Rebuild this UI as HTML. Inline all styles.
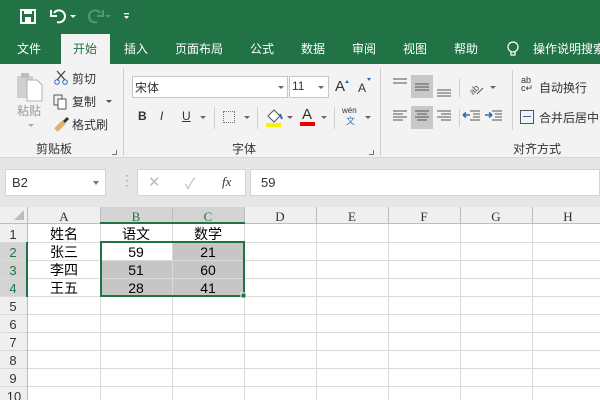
<!DOCTYPE html>
<html><head><meta charset="utf-8"><style>
*{margin:0;padding:0;box-sizing:border-box}
body{width:600px;height:400px;overflow:hidden;position:relative;background:#fff;font-family:"Liberation Sans","Noto Sans CJK SC",sans-serif;font-size:12px;color:#333}
.a{position:absolute}
.t{position:absolute;color:#fff;font-size:12px;top:40px;white-space:nowrap}
.r{position:absolute;font-size:12px;color:#333;white-space:nowrap}
.s{font-family:"Liberation Serif","Noto Serif CJK SC",serif}
.cell{position:absolute;text-align:center;font-size:14px;color:#000;font-family:"Liberation Sans","Noto Sans CJK SC",sans-serif;line-height:18px;height:18px}
</style></head><body>
<div class="a" style="left:0;top:0;width:600px;height:64px;background:#217346"></div>
<svg class="a" style="left:0;top:0" width="140" height="32">
<rect x="21" y="10" width="14" height="13" fill="none" stroke="#fff" stroke-width="2"/><rect x="24" y="10" width="8" height="4" fill="#fff"/><rect x="25" y="17" width="6" height="6" fill="#fff"/>
<path d="M54 13 A6 6 0 1 1 57 22" fill="none" stroke="#fff" stroke-width="2"/><path d="M51 10 L51 16 L57 16" fill="none" stroke="#fff" stroke-width="2"/>
<path d="M70 15 l3 3 l3 -3z" fill="#fff"/>
<path d="M100 13 A6 6 0 1 0 97 22" fill="none" stroke="#4f9a70" stroke-width="2"/><path d="M103 10 L103 16 L97 16" fill="none" stroke="#4f9a70" stroke-width="2"/>
<path d="M105 15 l3 3 l3 -3z" fill="#4f9a70"/>
<rect x="124" y="13" width="5" height="1.3" fill="#fff"/><path d="M124 16 l2.5 3 l2.5 -3z" fill="#fff"/>
</svg>
<div class="a" style="left:61px;top:34px;width:49px;height:30px;background:#f3f3f3"></div>
<div class="t" style="left:17px">文件</div>
<div class="t" style="left:73px;color:#217346">开始</div>
<div class="t" style="left:124px">插入</div>
<div class="t" style="left:175px">页面布局</div>
<div class="t" style="left:250px">公式</div>
<div class="t" style="left:301px">数据</div>
<div class="t" style="left:352px">审阅</div>
<div class="t" style="left:403px">视图</div>
<div class="t" style="left:454px">帮助</div>
<svg class="a" style="left:505px;top:40px" width="16" height="18"><circle cx="8" cy="7" r="5" fill="none" stroke="#fff" stroke-width="1.2"/><path d="M6 12 v3 h4 v-3" fill="none" stroke="#fff" stroke-width="1.2"/></svg>
<div class="t" style="left:533px">操作说明搜索</div>
<div class="a" style="left:0;top:64px;width:600px;height:94px;background:#f3f3f3;border-bottom:1px solid #d6d6d6"></div>
<div class="a" style="left:0;top:158px;width:600px;height:49px;background:#e6e6e6"></div>
<div class="a" style="left:123px;top:68px;width:1px;height:88px;background:#d0d0d0"></div>
<div class="a" style="left:380px;top:68px;width:1px;height:88px;background:#d0d0d0"></div>
<div class="a" style="left:512px;top:70px;width:1px;height:60px;background:#d0d0d0"></div>
<svg class="a" style="left:14px;top:70px" width="32" height="34"><rect x="3" y="6" width="16" height="22" fill="#d0d0d0"/><rect x="7" y="3" width="8" height="5" fill="#bdbdbd"/><path d="M13 10 h10 l5 5 v16 h-15z" fill="#fff" stroke="#b0b0b0"/></svg>
<div class="r" style="left:17px;top:102px;color:#999">粘贴</div>
<div class="a" style="left:28px;top:124px;border:3px solid transparent;border-top:3px solid #aaa"></div>
<svg class="a" style="left:52px;top:68px" width="20" height="70">
<path d="M5 3 L13 12 M13 3 L5 12" stroke="#444" stroke-width="1.3"/><circle cx="5" cy="14" r="2.3" fill="none" stroke="#2b6cb0"/><circle cx="13" cy="14" r="2.3" fill="none" stroke="#2b6cb0"/>
<rect x="2" y="27" width="8" height="10" fill="none" stroke="#555"/><rect x="6" y="31" width="8" height="10" fill="#fff" stroke="#555"/>
<path d="M4 62 L12 54" stroke="#e0b070" stroke-width="5"/><path d="M12 54 L16 50" stroke="#333" stroke-width="3"/>
</svg>
<div class="r" style="left:72px;top:70px">剪切</div>
<div class="r" style="left:72px;top:93px">复制</div>
<div class="a" style="left:106px;top:100px;border:3px solid transparent;border-top:3px solid #555"></div>
<div class="r" style="left:72px;top:116px">格式刷</div>
<div class="r" style="left:36px;top:140px">剪贴板</div>
<div class="a" style="left:112px;top:150px;width:5px;height:5px;border-right:1px solid #777;border-bottom:1px solid #777"></div>
<div class="a" style="left:132px;top:76px;width:156px;height:22px;background:#fff;border:1px solid #c6c6c6"></div>
<div class="r" style="left:135px;top:79px">宋体</div>
<div class="a" style="left:278px;top:86px;border:3px solid transparent;border-top:3px solid #666"></div>
<div class="a" style="left:289px;top:76px;width:40px;height:22px;background:#fff;border:1px solid #c6c6c6"></div>
<div class="r" style="left:292px;top:79px">11</div>
<div class="a" style="left:318px;top:86px;border:3px solid transparent;border-top:3px solid #666"></div>
<div class="r" style="left:335px;top:78px;font-size:15px">A</div><div class="a" style="left:345px;top:78px;border:2px solid transparent;border-bottom:3px solid #2b6cb0"></div>
<div class="r" style="left:358px;top:81px;font-size:12px">A</div><div class="a" style="left:367px;top:78px;border:2px solid transparent;border-top:3px solid #2b6cb0"></div>
<div class="r" style="left:138px;top:109px;font-weight:bold">B</div>
<div class="r" style="left:160px;top:109px;font-style:italic">I</div>
<div class="r" style="left:182px;top:109px;text-decoration:underline">U</div>
<div class="a" style="left:200px;top:116px;border:3px solid transparent;border-top:3px solid #666"></div>
<div class="a" style="left:214px;top:107px;width:1px;height:22px;background:#d0d0d0"></div>
<div class="a" style="left:223px;top:111px;width:12px;height:12px;border:1px dotted #777"></div>
<div class="a" style="left:244px;top:116px;border:3px solid transparent;border-top:3px solid #666"></div>
<div class="a" style="left:257px;top:107px;width:1px;height:22px;background:#d0d0d0"></div>
<svg class="a" style="left:264px;top:106px" width="20" height="22"><path d="M4 10 L10 4 L16 10 L10 16z" fill="#fff" stroke="#555"/><path d="M16 8 l2 5" stroke="#2b6cb0" stroke-width="2"/><rect x="2" y="17" width="15" height="4" fill="#f5f500"/></svg>
<div class="a" style="left:287px;top:116px;border:3px solid transparent;border-top:3px solid #666"></div>
<div class="r" style="left:302px;top:106px;font-size:15px">A</div><div class="a" style="left:300px;top:122px;width:15px;height:4px;background:#e00"></div>
<div class="a" style="left:321px;top:116px;border:3px solid transparent;border-top:3px solid #666"></div>
<div class="a" style="left:334px;top:107px;width:1px;height:22px;background:#d0d0d0"></div>
<div class="r" style="left:342px;top:106px;font-size:8px">wén</div><div class="r" style="left:346px;top:114px;font-size:9px;color:#2b6cb0">文</div>
<div class="a" style="left:365px;top:116px;border:3px solid transparent;border-top:3px solid #666"></div>
<div class="r" style="left:232px;top:140px">字体</div>
<div class="a" style="left:369px;top:150px;width:5px;height:5px;border-right:1px solid #777;border-bottom:1px solid #777"></div>
<!-- align -->
<div class="a" style="left:411px;top:75px;width:22px;height:23px;background:#c8c8c8"></div>
<div class="a" style="left:411px;top:106px;width:22px;height:23px;background:#c8c8c8"></div>
<svg class="a" style="left:390px;top:74px" width="125" height="58">
<g stroke="#555" stroke-width="1">
<path d="M3 5h14M3 9h14M25 10h14M25 13h14M25 16h14M47 16h14M47 19h14M47 22h14"/>
<path d="M3 37h14M3 40h10M3 43h14M3 46h10M25 37h14M27 40h10M25 43h14M27 46h10M47 37h14M51 40h10M47 43h14M51 46h10"/>
<path d="M80 37h10M83 40h7M83 43h7M80 46h10M102 37h10M105 40h7M105 43h7M102 46h10"/>
</g>
<path d="M73 41h7M73 41l3-2.5M73 41l3 2.5" stroke="#2b6cb0" stroke-width="1.5"/><path d="M95 41h7M102 41l-3-2.5M102 41l-3 2.5" stroke="#2b6cb0" stroke-width="1.5"/>
<text x="78" y="20" font-size="9" fill="#555" font-family="Liberation Sans" transform="rotate(-45 82 15)">ab</text>
<path d="M87 20l6-6" stroke="#555"/>
</svg>
<div class="a" style="left:490px;top:86px;border:3px solid transparent;border-top:3px solid #666"></div>
<div class="a" style="left:459px;top:79px;width:1px;height:18px;background:#d0d0d0"></div>
<div class="a" style="left:459px;top:109px;width:1px;height:18px;background:#d0d0d0"></div>
<div class="r" style="left:513px;top:140px">对齐方式</div>
<div class="r" style="left:521px;top:76px;font-size:9px;line-height:8px">ab<br>c↵</div>
<div class="r" style="left:539px;top:79px">自动换行</div>
<div class="a" style="left:520px;top:110px;width:14px;height:14px;border:1px solid #555"></div>
<div class="a" style="left:523px;top:116px;width:8px;height:1px;background:#2b6cb0"></div>
<div class="r" style="left:539px;top:109px">合并后居中</div>
<!-- formula bar -->
<div class="a" style="left:5px;top:169px;width:101px;height:27px;background:#fff;border:1px solid #d4d4d4"></div>
<div class="r" style="left:12px;top:175px;font-size:13px">B2</div>
<div class="a" style="left:93px;top:181px;border:3.5px solid transparent;border-top:4px solid #777"></div>
<div class="r" style="left:120px;top:172px;color:#aaa;font-size:14px">⋮</div>
<div class="a" style="left:137px;top:169px;width:109px;height:27px;background:#fff;border:1px solid #d4d4d4"></div>
<div class="r" style="left:148px;top:173px;color:#bbb;font-size:15px">✕</div>
<div class="r" style="left:185px;top:173px;color:#bbb;font-size:15px">✓</div>
<div class="r s" style="left:222px;top:174px;font-style:italic;font-size:13px">fx</div>
<div class="a" style="left:250px;top:169px;width:350px;height:27px;background:#fff;border:1px solid #d4d4d4"></div>
<div class="r" style="left:261px;top:175px;font-size:13px">59</div>
<!-- grid -->
<svg class="a" style="left:0;top:207px" width="600" height="193">
<rect x="0" y="0" width="600" height="17" fill="#efefef"/>
<rect x="0" y="17" width="28" height="176" fill="#efefef"/>
<rect x="101" y="0" width="143" height="17" fill="#d4d4d4"/>
<rect x="0" y="35" width="28" height="54" fill="#d4d4d4"/>
<rect x="101" y="35" width="143" height="54" fill="#c6c6c6"/>
<rect x="101" y="35" width="71" height="18" fill="#fff"/>
<g stroke="#dadada" stroke-width="1">
<path d="M0 35.5h600M0 53.5h600M0 71.5h600M0 89.5h600M0 107.5h600M0 125.5h600M0 143.5h600M0 161.5h600M0 179.5h600"/>
<path d="M100.5 17v176M172.5 17v176M244.5 17v176M316.5 17v176M388.5 17v176M460.5 17v176M532.5 17v176"/>
</g>
<g stroke="#bdbdbd" stroke-width="1">
<path d="M0 16.5h600M27.5 0v193M100.5 0v17M172.5 0v17M244.5 0v17M316.5 0v17M388.5 0v17M460.5 0v17M532.5 0v17"/>
</g>
<path d="M14 13 L24 13 L24 3z" fill="#bdbdbd"/>
<path d="M100 16h145" stroke="#217346" stroke-width="2"/>
<path d="M27 35v55" stroke="#217346" stroke-width="2"/>
<rect x="101" y="35" width="143" height="54" fill="none" stroke="#217346" stroke-width="2"/>
<rect x="241" y="86" width="5" height="5" fill="#217346" stroke="#fff"/>
<g font-family="Liberation Serif" font-size="13" text-anchor="middle" fill="#333">
<text x="64" y="14">A</text><text x="136" y="14" fill="#217346">B</text><text x="208" y="14" fill="#217346">C</text>
<text x="280" y="14">D</text><text x="352" y="14">E</text><text x="424" y="14">F</text><text x="496" y="14">G</text><text x="568" y="14">H</text>
</g>
<g font-family="Liberation Sans" font-size="13" text-anchor="middle" fill="#333">
<text x="13" y="32">1</text><text x="13" y="50" fill="#217346">2</text><text x="13" y="68" fill="#217346">3</text><text x="13" y="86" fill="#217346">4</text>
<text x="13" y="104">5</text><text x="13" y="122">6</text><text x="13" y="140">7</text><text x="13" y="158">8</text><text x="13" y="176">9</text><text x="14" y="194">10</text>
</g>
</svg>
<div class="cell" style="left:28px;top:225px;width:72px">姓名</div>
<div class="cell" style="left:100px;top:225px;width:72px">语文</div>
<div class="cell" style="left:172px;top:225px;width:72px">数学</div>
<div class="cell" style="left:28px;top:243px;width:72px">张三</div>
<div class="cell" style="left:100px;top:243px;width:72px">59</div>
<div class="cell" style="left:172px;top:243px;width:72px">21</div>
<div class="cell" style="left:28px;top:261px;width:72px">李四</div>
<div class="cell" style="left:100px;top:261px;width:72px">51</div>
<div class="cell" style="left:172px;top:261px;width:72px">60</div>
<div class="cell" style="left:28px;top:279px;width:72px">王五</div>
<div class="cell" style="left:100px;top:279px;width:72px">28</div>
<div class="cell" style="left:172px;top:279px;width:72px">41</div>
</body></html>
